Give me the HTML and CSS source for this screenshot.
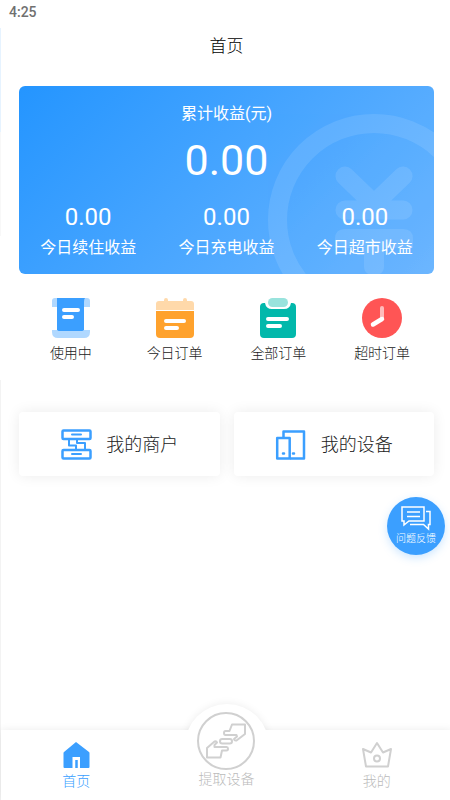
FILE: index.html
```html
<!DOCTYPE html>
<html lang="zh-CN">
<head>
<meta charset="utf-8">
<meta name="viewport" content="width=device-width, initial-scale=1">
<title>首页</title>
<link rel="stylesheet" href="styles.css">
</head>
<body>
<div class="page">
  <div class="status">4:25</div>
  <header class="header"><h1>首页</h1></header>
  <main class="main">
    <section class="income">
      <svg class="income-mark" viewBox="0 0 166 160" aria-hidden="true">
        <g fill="none" stroke="#fff" stroke-width="19">
          <circle cx="106" cy="106" r="96.5"/>
          <path d="M77 62l29 28 29-28M77 96h58" stroke-linecap="round" stroke-linejoin="round"/>
        </g>
        <path d="M67 134v-9q0-10 10-10h58q10 0 10 10v9h-29v18q0 9-10 9t-10-9v-18z" fill="#fff"/>
      </svg>
      <p class="income-label">累计收益(元)</p>
      <p class="income-total">0.00</p>
      <div class="income-row">
        <div><p class="income-value">0.00</p><p class="income-label">今日续住收益</p></div>
        <div><p class="income-value">0.00</p><p class="income-label">今日充电收益</p></div>
        <div><p class="income-value">0.00</p><p class="income-label">今日超市收益</p></div>
      </div>
    </section>
    <nav class="orders" aria-label="订单">
      <a href="#using">
        <svg width="40" height="40" viewBox="0 0 40 40" aria-hidden="true">
          <path d="M4 0h32q3 0 3 3v6h-6V2H7v7H1V3q0-3 3-3z" fill="#b0d8ff"/>
          <path d="M6 0h28q-1 1-1 4v30H6z" fill="#3b9fff"/>
          <path d="M1 32h4q3 0 4 0h24h6v2q0 6-6 6H7q-6 0-6-6z" fill="#b0d8ff"/>
          <path d="M6 31h27q0 2-3 2H9q-3 0-3-2z" fill="#3b9fff"/>
          <path d="M13 12h14M13 19h8" stroke="#fff" stroke-width="4" stroke-linecap="round"/>
        </svg>
        <span>使用中</span>
      </a>
      <a href="#today">
        <svg width="40" height="40" viewBox="0 0 40 40" aria-hidden="true">
          <path d="M1 12V6q0-3 3-3h5V2q0-2 2-2t2 2v1h15V2q0-2 2-2t2 2v1h4q3 0 3 3v6z" fill="#ffd9aa"/>
          <path d="M1 13h38v23q0 4-4 4H5q-4 0-4-4z" fill="#ffa22d"/>
          <path d="M11 23h18M11 30h11" stroke="#fff" stroke-width="4" stroke-linecap="round"/>
        </svg>
        <span>今日订单</span>
      </a>
      <a href="#all">
        <svg width="40" height="40" viewBox="0 0 40 40" aria-hidden="true">
          <path d="M6 5h1q1 6 7 6h12q6 0 7-6h1q4 0 4 4v27q0 4-4 4H6q-4 0-4-4V9q0-4 4-4z" fill="#02b8ab"/>
          <rect x="10" y="0" width="20" height="9" rx="4.5" fill="#99e3dd"/>
          <path d="M10 21h19M10 28h12" stroke="#fff" stroke-width="4" stroke-linecap="round"/>
        </svg>
        <span>全部订单</span>
      </a>
      <a href="#overdue">
        <svg width="40" height="40" viewBox="0 0 40 40" aria-hidden="true">
          <circle cx="20" cy="20" r="20" fill="#ff5555"/>
          <path d="M20 10v10" stroke="#ffbbbb" stroke-width="4" stroke-linecap="round"/>
          <path d="M20 21l-9 5.500" stroke="#fff" stroke-width="4.500" stroke-linecap="round"/>
        </svg>
        <span>超时订单</span>
      </a>
    </nav>
    <div class="entries">
      <a href="#merchant">
        <svg width="32" height="32" viewBox="0 0 32 32" fill="none" stroke="#3b9fff" stroke-width="2" stroke-linejoin="round" aria-hidden="true">
          <g stroke-width="2.500"><rect x="2.500" y="2.500" width="28" height="8.500" rx="1"/><rect x="2.500" y="22" width="28" height="8.500" rx="1"/></g>
          <path d="M9 11v6.500h7V22M17 11v4h8v7"/>
          <path d="M12 6.500h9M12 26h9" stroke-linecap="round"/>
        </svg>
        <span>我的商户</span>
      </a>
      <a href="#device">
        <svg width="32" height="32" viewBox="0 0 32 32" fill="none" stroke="#3b9fff" stroke-width="2.500" stroke-linejoin="round" aria-hidden="true">
          <path d="M8.500 10V3.500h20.500v27H15"/>
          <rect x="2.200" y="10" width="12.500" height="20.500"/>
          <path d="M8 25.500h1M18 25.500h1" stroke-linecap="round"/>
        </svg>
        <span>我的设备</span>
      </a>
    </div>
  </main>
  <button class="feedback" type="button">
    <svg width="32" height="26" viewBox="0 0 32 26" fill="none" stroke="#fff" stroke-width="1.500" aria-hidden="true">
      <path d="M2 2h22v14H9l-5 4v-4H2z"/>
      <path d="M26 6.500h4v13h-1.500v4.500l-5-4.500H10"/>
      <path d="M7 7h13M7 11.500h13"/>
    </svg>
    <span>问题反馈</span>
  </button>
  <nav class="tabs" aria-label="主导航">
    <a class="tab active" href="#home">
      <svg width="28" height="28" viewBox="0 0 28 28" aria-hidden="true">
        <path d="M14 1L27 11q.5.500.5 1V26q0 1-1 1H18V16H10.500V27h-8q-1 0-1-1V12q0-.5.500-1z" fill="#3b9fff"/>
        <path d="M14.500 19v8" stroke="#3b9fff" stroke-width="2.500"/>
      </svg>
      <span>首页</span>
    </a>
    <a class="tab tab-center" href="#extract">
      <svg width="60" height="60" viewBox="0 0 60 60" fill="none" stroke="#d0d0d0" stroke-width="2" stroke-linejoin="round" aria-hidden="true">
        <circle cx="30" cy="30" r="28"/>
        <rect x="24" y="28" width="12" height="4.500" rx="2.200"/>
        <path d="M49 13.500H36l-2.500 6.500H29.500q-1.500 0-1.500 2t1.500 2h11l.5 1.500-3 2.500q.5 2 2.500 1.500L49 23z"/>
        <path d="M11 46.500h13.500l1.500-7h4.500q1.500 0 1.500-1.700t-1.500-1.800H18.500v-2l2.500-2.500q-.5-1.500-2.500-1L11 37z"/>
      </svg>
      <span>提取设备</span>
    </a>
    <a class="tab" href="#mine">
      <svg width="32" height="28" viewBox="0 0 32 28" fill="none" stroke="#d0d0d0" stroke-width="2" stroke-linejoin="round" aria-hidden="true">
        <path d="M2 8l8 3.500L16 2l6 9.500L30 8l-3 17.500H5z"/>
        <circle cx="16" cy="17.500" r="3"/>
      </svg>
      <span>我的</span>
    </a>
  </nav>
</div>
</body>
</html>
```
FILE: styles.css
```css
* {
  box-sizing: border-box;
}

body,
h1,
p {
  margin: 0;
}

body {
  font-family: Roboto, "Noto Sans CJK SC", sans-serif;
  color: #222;
  background: #fff;
}

a {
  color: inherit;
  text-decoration: none;
}

svg {
  display: block;
}

.page {
  display: flex;
  flex-direction: column;
  min-height: 100vh;
  position: relative;
  overflow: hidden;
  padding-left: 1px;
  background: linear-gradient(#fff 28px, #e6f3ff 28px 132px, #f8f8f8 132px 236px, #fff 236px 380px, #f3f3f3 380px) left / 1px 100% no-repeat;
}

.status {
  height: 24px;
  padding-left: 8px;
  font-size: 14px;
  font-weight: 500;
  line-height: 24px;
  color: #707070;
}

.header {
  height: 44px;
  padding-left: 2px;
  text-align: center;
}

.header h1 {
  font-size: 17px;
  font-weight: 300;
  line-height: 44px;
  color: #000;
}

.main {
  padding: 18px 16px 0 18px;
}

.income {
  position: relative;
  overflow: hidden;
  padding: 16px 0 14px;
  border-radius: 6px;
  color: #fff;
  text-align: center;
  background: linear-gradient(135deg, #2495ff, #6cb6ff);
}

.income > p,
.income-row {
  position: relative;
}

.income-mark {
  position: absolute;
  right: 0;
  bottom: 0;
  width: 166px;
  height: 160px;
  opacity: 0.1;
}

.income-label {
  font-size: 16px;
  line-height: 24px;
}

.income-total {
  font-size: 43px;
  line-height: 68px;
}

.income-row {
  display: grid;
  grid-template-columns: repeat(3, 1fr);
  margin-top: 6px;
}

.income-value {
  font-size: 24px;
  line-height: 34px;
  padding-bottom: 2px;
}

.orders {
  display: grid;
  grid-template-columns: repeat(4, 1fr);
  margin-top: 24px;
}

.orders a {
  display: flex;
  flex-direction: column;
  align-items: center;
  gap: 5px;
  font-size: 14px;
  font-weight: 300;
  line-height: 20px;
}

.entries {
  display: grid;
  grid-template-columns: repeat(2, 1fr);
  gap: 14px;
  margin-top: 49px;
}

.entries a {
  display: flex;
  align-items: center;
  justify-content: center;
  gap: 14px;
  height: 64px;
  border-radius: 4px;
  font-size: 18px;
  font-weight: 300;
  background: #fff;
  box-shadow: 0 0 14px rgba(0, 0, 0, 0.08);
}

.entries span {
  padding-bottom: 3px;
}

.feedback {
  position: absolute;
  right: 5px;
  bottom: 245px;
  display: flex;
  flex-direction: column;
  align-items: center;
  width: 58px;
  height: 58px;
  padding: 8px 0 0;
  border: 0;
  border-radius: 50%;
  font: 300 10px/14px "Noto Sans CJK SC", sans-serif;
  color: #fff;
  background: #3b9fff;
  box-shadow: 0 3px 8px rgba(59, 159, 255, 0.25);
}

.tabs {
  position: relative;
  display: grid;
  grid-template-columns: repeat(3, 1fr);
  height: 70px;
  margin-top: auto;
  margin-right: -2px;
  background: #fff;
  box-shadow: 0 0 8px rgba(0, 0, 0, 0.08);
}

/* The raised disc behind the centre tab. */
.tabs::before {
  content: "";
  position: absolute;
  top: -26px;
  left: 50%;
  width: 84px;
  height: 84px;
  margin-left: -42px;
  border-radius: 50%;
  background: #fff;
  box-shadow: 0 0 8px rgba(0, 0, 0, 0.08);
  clip-path: inset(-10px -10px 58px -10px);
}

.tab {
  position: relative;
  display: flex;
  flex-direction: column;
  align-items: center;
  padding-top: 11px;
  font-size: 14px;
  font-weight: 300;
  line-height: 24px;
  color: #bbb;
}

.tab.active {
  color: #3b9fff;
}

.tab-center {
  margin-top: -30px;
  line-height: 16px;
}
```
